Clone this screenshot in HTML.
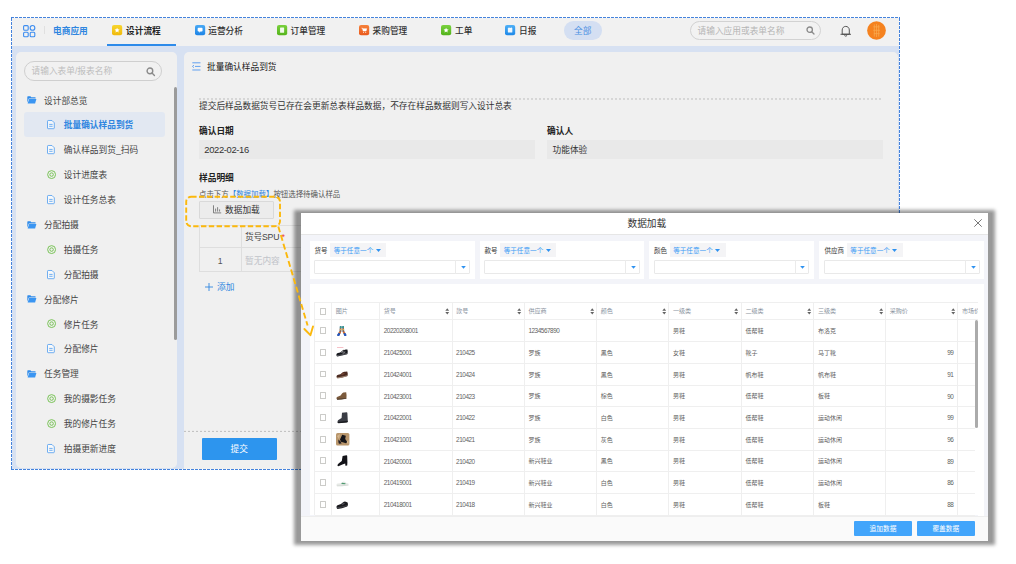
<!DOCTYPE html>
<html lang="zh-CN">
<head>
<meta charset="utf-8">
<title>批量确认样品到货 - 数据加载</title>
<style>
html,body{margin:0;padding:0;background:#fff;}
body{width:1016px;height:564px;position:relative;overflow:hidden;font-family:"Liberation Sans","Noto Sans CJK SC",sans-serif;}
.t{position:absolute;white-space:nowrap;margin:0;padding:0;}
.b{position:absolute;box-sizing:border-box;}
svg{position:absolute;overflow:visible;}
#app{position:absolute;left:0;top:0;width:1016px;height:564px;}
#modal{position:absolute;left:301px;top:213px;width:687px;height:328px;background:#fff;overflow:hidden;}
#modal .t,#modal .b,#modal svg{position:absolute;}
</style>
</head>
<body>
<div id="app">

<div class="b" style="left:12px;top:18px;width:887px;height:451px;background:#d7e1f2;"></div>
<div class="b" style="left:12px;top:18px;width:887px;height:28px;background:#f1f1f1;"></div>
<div class="b" style="left:16px;top:52px;width:161px;height:416px;background:#f0f0f0;border-radius:5px;"></div>
<div class="b" style="left:183.6px;top:52px;width:714.6px;height:417px;background:#f0f0f0;border-radius:5px 5px 0 0;"></div>
<svg style="left:0;top:0" width="1016" height="564"><path d="M11 17.5 H900 M11 469.5 H900 M11.5 18 V469 M899.5 18 V469" fill="none" stroke="#4583dc" stroke-width="1" stroke-dasharray="3 1"/></svg>
<svg style="left:22.5px;top:24.5px" width="12.5" height="12.5" viewBox="0 0 12.5 12.5" fill="none" stroke="#3d8df0" stroke-width="1.1">
<rect x="0.6" y="0.6" width="4.6" height="4.6" rx="1"/><circle cx="9.5" cy="2.9" r="2.35"/>
<rect x="0.6" y="7.2" width="4.6" height="4.6" rx="1"/><rect x="7.2" y="7.2" width="4.6" height="4.6" rx="1"/></svg>
<div class="b" style="left:44px;top:26.2px;width:1px;height:8px;background:#e0e0e0;"></div>
<div class="t" style="left:53px;top:24px;font-size:8.7px;line-height:14px;color:#2f86e0;font-weight:700;">电商应用</div>
<svg style="left:112.4px;top:25px" width="10.2" height="10.2" viewBox="0 0 10 10"><defs><linearGradient id="g112" x1="0" y1="0" x2="0" y2="1"><stop offset="0" stop-color="#f7d52e"/><stop offset="1" stop-color="#f0b90c"/></linearGradient></defs><rect x="0" y="0" width="10" height="10" rx="2" fill="url(#g112)"/><path d="M5 2.6 L5.75 4.2 L7.5 4.4 L6.2 5.6 L6.55 7.3 L5 6.45 L3.45 7.3 L3.8 5.6 L2.5 4.4 L4.25 4.2 Z" fill="#fff"/></svg>
<div class="t" style="left:126px;top:24px;font-size:8.7px;line-height:14px;color:#222;font-weight:700;">设计流程</div>
<div class="b" style="left:107px;top:44px;width:69px;height:2px;background:#2e8bea;"></div>
<svg style="left:194.5px;top:25px" width="10.2" height="10.2" viewBox="0 0 10 10"><defs><linearGradient id="g194" x1="0" y1="0" x2="0" y2="1"><stop offset="0" stop-color="#49a9f5"/><stop offset="1" stop-color="#1d84e6"/></linearGradient></defs><rect x="0" y="0" width="10" height="10" rx="2" fill="url(#g194)"/><rect x="2.6" y="2.8" width="4.8" height="3.6" rx="0.8" fill="#fff"/><path d="M4 6.2 L4 7.6 L5.5 6.2 Z" fill="#fff"/></svg>
<div class="t" style="left:208.2px;top:24px;font-size:8.7px;line-height:14px;color:#333;font-weight:500;">运营分析</div>
<svg style="left:276.8px;top:25px" width="10.2" height="10.2" viewBox="0 0 10 10"><defs><linearGradient id="g276" x1="0" y1="0" x2="0" y2="1"><stop offset="0" stop-color="#79d03c"/><stop offset="1" stop-color="#55b41c"/></linearGradient></defs><rect x="0" y="0" width="10" height="10" rx="2" fill="url(#g276)"/><rect x="3" y="2.4" width="4" height="5.2" rx="0.5" fill="#fff" fill-opacity=".9"/></svg>
<div class="t" style="left:290.5px;top:24px;font-size:8.7px;line-height:14px;color:#333;font-weight:500;">订单管理</div>
<svg style="left:358.8px;top:25px" width="10.2" height="10.2" viewBox="0 0 10 10"><defs><linearGradient id="g358" x1="0" y1="0" x2="0" y2="1"><stop offset="0" stop-color="#f6813a"/><stop offset="1" stop-color="#ea5a1d"/></linearGradient></defs><rect x="0" y="0" width="10" height="10" rx="2" fill="url(#g358)"/><path d="M2.4 3 L3.4 3 L4 5.8 L7 5.8 L7.6 3.6 L3.6 3.6" fill="#fff" stroke="#fff" stroke-width=".5" stroke-linejoin="round"/><circle cx="4.4" cy="7.1" r=".5" fill="#fff"/><circle cx="6.6" cy="7.1" r=".5" fill="#fff"/></svg>
<div class="t" style="left:372.5px;top:24px;font-size:8.7px;line-height:14px;color:#333;font-weight:500;">采购管理</div>
<svg style="left:440.8px;top:25px" width="10.2" height="10.2" viewBox="0 0 10 10"><defs><linearGradient id="g440" x1="0" y1="0" x2="0" y2="1"><stop offset="0" stop-color="#7ad23f"/><stop offset="1" stop-color="#52b21b"/></linearGradient></defs><rect x="0" y="0" width="10" height="10" rx="2" fill="url(#g440)"/><path d="M5 2.6 L5.75 4.2 L7.5 4.4 L6.2 5.6 L6.55 7.3 L5 6.45 L3.45 7.3 L3.8 5.6 L2.5 4.4 L4.25 4.2 Z" fill="#fff"/></svg>
<div class="t" style="left:455px;top:24px;font-size:8.7px;line-height:14px;color:#333;font-weight:500;">工单</div>
<svg style="left:505px;top:25px" width="10.2" height="10.2" viewBox="0 0 10 10"><defs><linearGradient id="g505" x1="0" y1="0" x2="0" y2="1"><stop offset="0" stop-color="#4fb0f7"/><stop offset="1" stop-color="#1d88e8"/></linearGradient></defs><rect x="0" y="0" width="10" height="10" rx="2" fill="url(#g505)"/><rect x="2.8" y="3" width="4.4" height="4.4" rx="0.5" fill="#fff" fill-opacity=".92"/><rect x="3.6" y="2.2" width=".7" height="1.4" fill="#fff"/><rect x="5.7" y="2.2" width=".7" height="1.4" fill="#fff"/></svg>
<div class="t" style="left:519px;top:24px;font-size:8.7px;line-height:14px;color:#333;font-weight:500;">日报</div>
<div class="b" style="left:564px;top:21px;width:37.5px;height:18.6px;background:#d4dff2;border-radius:9.3px;"></div>
<div class="t" style="left:574px;top:24px;font-size:8.7px;line-height:14px;color:#4a90e2;font-weight:400;">全部</div>
<div class="b" style="left:690px;top:21px;width:130.5px;height:19.2px;border:1px solid #d2d2d2;border-radius:9.6px;background:#f2f2f2;"></div>
<div class="t" style="left:697.5px;top:24px;font-size:8.7px;line-height:14px;color:#b5b5b5;font-weight:400;">请输入应用或表单名称</div>
<svg style="left:805.5px;top:26px" width="9" height="9" viewBox="0 0 9 9" fill="none" stroke="#8a8a8a" stroke-width="1.3"><circle cx="3.7" cy="3.7" r="2.7"/><path d="M5.7 5.7 L8 8" stroke-linecap="round"/></svg>
<svg style="left:840px;top:24.5px" width="11.5" height="12.5" viewBox="0 0 11.5 12.5" fill="none" stroke="#444" stroke-width="0.9"><path d="M2.2 9.2 L2.2 5 C2.2 2.8 3.8 1.4 5.75 1.4 C7.7 1.4 9.3 2.8 9.3 5 L9.3 9.2 Z" stroke-linejoin="round"/><path d="M0.9 9.3 L10.6 9.3" stroke-linecap="round"/><path d="M4.7 10.8 Q5.75 11.8 6.8 10.8" stroke-linecap="round"/></svg>
<svg style="left:866.6px;top:20.8px" width="19" height="19" viewBox="0 0 19.5 19.5"><circle cx="9.75" cy="9.75" r="9.6" fill="#f5821f"/><path d="M7.5 3.5 L7.5 16 M9.8 3 L9.8 16.5 M12 4 L12 16 M6.5 6 L13 6 M6.5 9.5 L13.3 9.5 M7 13 L13 13" stroke="#f8a94e" stroke-width=".8" fill="none"/></svg>
<div class="b" style="left:24px;top:61px;width:137.5px;height:20px;border:1px solid #cfcfcf;border-radius:10px;background:#f1f1f1;"></div>
<div class="t" style="left:31.5px;top:64px;font-size:8.7px;line-height:14px;color:#bdbdbd;font-weight:400;">请输入表单/报表名称</div>
<svg style="left:145.5px;top:66.5px" width="9.5" height="9.5" viewBox="0 0 9 9" fill="none" stroke="#8a8a8a" stroke-width="1.3"><circle cx="3.7" cy="3.7" r="2.7"/><path d="M5.7 5.7 L8 8" stroke-linecap="round"/></svg>
<div class="b" style="left:174px;top:87px;width:3px;height:253px;background:#9b9b9b;border-radius:1.5px;"></div>
<div class="b" style="left:24px;top:112.3px;width:141px;height:24.4px;background:#e2e8f2;border-radius:3px;"></div>
<svg style="left:26.8px;top:96.30px" width="9.6" height="7.9" viewBox="0 0 9 7.4"><path d="M0.3 0.9 Q0.3 0.3 0.9 0.3 L3.2 0.3 L4 1.2 L7.6 1.2 Q8.1 1.2 8.1 1.7 L8.1 2.4 L1.7 2.4 L0.3 6.3 Z" fill="#2f8bea"/><path d="M2 2.9 L8.8 2.9 L7.6 7 L0.6 7 Z" fill="#3a95f2"/></svg>
<div class="t" style="left:44px;top:94px;font-size:8.7px;line-height:14px;color:#444;font-weight:400;">设计部总览</div>
<svg style="left:47.4px;top:120.00px" width="7.8" height="9.2" viewBox="0 0 7.8 9.2" fill="none" stroke="#4c9cf0" stroke-width=".8"><path d="M0.5 1.2 Q0.5 0.5 1.2 0.5 L5 0.5 L7.3 2.8 L7.3 8 Q7.3 8.7 6.6 8.7 L1.2 8.7 Q0.5 8.7 0.5 8 Z" fill="#fff" fill-opacity=".6"/><path d="M2.2 4.4 L5.6 4.4 M2.2 6.3 L5.6 6.3"/></svg>
<div class="t" style="left:63.8px;top:118px;font-size:8.7px;line-height:14px;color:#2f86e0;font-weight:700;">批量确认样品到货</div>
<svg style="left:47.4px;top:145.20px" width="7.8" height="9.2" viewBox="0 0 7.8 9.2" fill="none" stroke="#4c9cf0" stroke-width=".8"><path d="M0.5 1.2 Q0.5 0.5 1.2 0.5 L5 0.5 L7.3 2.8 L7.3 8 Q7.3 8.7 6.6 8.7 L1.2 8.7 Q0.5 8.7 0.5 8 Z" fill="#fff" fill-opacity=".6"/><path d="M2.2 4.4 L5.6 4.4 M2.2 6.3 L5.6 6.3"/></svg>
<div class="t" style="left:63.8px;top:143px;font-size:8.7px;line-height:14px;color:#444;font-weight:400;">确认样品到货_扫码</div>
<svg style="left:46.8px;top:170.10px" width="9.2" height="9.2" viewBox="0 0 9.2 9.2" fill="none" stroke="#72bf4e" stroke-width=".95"><circle cx="4.6" cy="4.6" r="3.95"/><circle cx="4.6" cy="4.6" r="1.75"/></svg>
<div class="t" style="left:63.8px;top:168px;font-size:8.7px;line-height:14px;color:#444;font-weight:400;">设计进度表</div>
<svg style="left:47.4px;top:194.90px" width="7.8" height="9.2" viewBox="0 0 7.8 9.2" fill="none" stroke="#4c9cf0" stroke-width=".8"><path d="M0.5 1.2 Q0.5 0.5 1.2 0.5 L5 0.5 L7.3 2.8 L7.3 8 Q7.3 8.7 6.6 8.7 L1.2 8.7 Q0.5 8.7 0.5 8 Z" fill="#fff" fill-opacity=".6"/><path d="M2.2 4.4 L5.6 4.4 M2.2 6.3 L5.6 6.3"/></svg>
<div class="t" style="left:63.8px;top:193px;font-size:8.7px;line-height:14px;color:#444;font-weight:400;">设计任务总表</div>
<svg style="left:26.8px;top:220.50px" width="9.6" height="7.9" viewBox="0 0 9 7.4"><path d="M0.3 0.9 Q0.3 0.3 0.9 0.3 L3.2 0.3 L4 1.2 L7.6 1.2 Q8.1 1.2 8.1 1.7 L8.1 2.4 L1.7 2.4 L0.3 6.3 Z" fill="#2f8bea"/><path d="M2 2.9 L8.8 2.9 L7.6 7 L0.6 7 Z" fill="#3a95f2"/></svg>
<div class="t" style="left:44px;top:218px;font-size:8.7px;line-height:14px;color:#444;font-weight:400;">分配拍摄</div>
<svg style="left:46.8px;top:244.70px" width="9.2" height="9.2" viewBox="0 0 9.2 9.2" fill="none" stroke="#72bf4e" stroke-width=".95"><circle cx="4.6" cy="4.6" r="3.95"/><circle cx="4.6" cy="4.6" r="1.75"/></svg>
<div class="t" style="left:63.8px;top:243px;font-size:8.7px;line-height:14px;color:#444;font-weight:400;">拍摄任务</div>
<svg style="left:47.4px;top:269.50px" width="7.8" height="9.2" viewBox="0 0 7.8 9.2" fill="none" stroke="#4c9cf0" stroke-width=".8"><path d="M0.5 1.2 Q0.5 0.5 1.2 0.5 L5 0.5 L7.3 2.8 L7.3 8 Q7.3 8.7 6.6 8.7 L1.2 8.7 Q0.5 8.7 0.5 8 Z" fill="#fff" fill-opacity=".6"/><path d="M2.2 4.4 L5.6 4.4 M2.2 6.3 L5.6 6.3"/></svg>
<div class="t" style="left:63.8px;top:268px;font-size:8.7px;line-height:14px;color:#444;font-weight:400;">分配拍摄</div>
<svg style="left:26.8px;top:295.10px" width="9.6" height="7.9" viewBox="0 0 9 7.4"><path d="M0.3 0.9 Q0.3 0.3 0.9 0.3 L3.2 0.3 L4 1.2 L7.6 1.2 Q8.1 1.2 8.1 1.7 L8.1 2.4 L1.7 2.4 L0.3 6.3 Z" fill="#2f8bea"/><path d="M2 2.9 L8.8 2.9 L7.6 7 L0.6 7 Z" fill="#3a95f2"/></svg>
<div class="t" style="left:44px;top:293px;font-size:8.7px;line-height:14px;color:#444;font-weight:400;">分配修片</div>
<svg style="left:46.8px;top:319.30px" width="9.2" height="9.2" viewBox="0 0 9.2 9.2" fill="none" stroke="#72bf4e" stroke-width=".95"><circle cx="4.6" cy="4.6" r="3.95"/><circle cx="4.6" cy="4.6" r="1.75"/></svg>
<div class="t" style="left:63.8px;top:318px;font-size:8.7px;line-height:14px;color:#444;font-weight:400;">修片任务</div>
<svg style="left:47.4px;top:344.10px" width="7.8" height="9.2" viewBox="0 0 7.8 9.2" fill="none" stroke="#4c9cf0" stroke-width=".8"><path d="M0.5 1.2 Q0.5 0.5 1.2 0.5 L5 0.5 L7.3 2.8 L7.3 8 Q7.3 8.7 6.6 8.7 L1.2 8.7 Q0.5 8.7 0.5 8 Z" fill="#fff" fill-opacity=".6"/><path d="M2.2 4.4 L5.6 4.4 M2.2 6.3 L5.6 6.3"/></svg>
<div class="t" style="left:63.8px;top:342px;font-size:8.7px;line-height:14px;color:#444;font-weight:400;">分配修片</div>
<svg style="left:26.8px;top:369.70px" width="9.6" height="7.9" viewBox="0 0 9 7.4"><path d="M0.3 0.9 Q0.3 0.3 0.9 0.3 L3.2 0.3 L4 1.2 L7.6 1.2 Q8.1 1.2 8.1 1.7 L8.1 2.4 L1.7 2.4 L0.3 6.3 Z" fill="#2f8bea"/><path d="M2 2.9 L8.8 2.9 L7.6 7 L0.6 7 Z" fill="#3a95f2"/></svg>
<div class="t" style="left:44px;top:367px;font-size:8.7px;line-height:14px;color:#444;font-weight:400;">任务管理</div>
<svg style="left:46.8px;top:393.90px" width="9.2" height="9.2" viewBox="0 0 9.2 9.2" fill="none" stroke="#72bf4e" stroke-width=".95"><circle cx="4.6" cy="4.6" r="3.95"/><circle cx="4.6" cy="4.6" r="1.75"/></svg>
<div class="t" style="left:63.8px;top:392px;font-size:8.7px;line-height:14px;color:#444;font-weight:400;">我的摄影任务</div>
<svg style="left:46.8px;top:418.70px" width="9.2" height="9.2" viewBox="0 0 9.2 9.2" fill="none" stroke="#72bf4e" stroke-width=".95"><circle cx="4.6" cy="4.6" r="3.95"/><circle cx="4.6" cy="4.6" r="1.75"/></svg>
<div class="t" style="left:63.8px;top:417px;font-size:8.7px;line-height:14px;color:#444;font-weight:400;">我的修片任务</div>
<svg style="left:47.4px;top:443.60px" width="7.8" height="9.2" viewBox="0 0 7.8 9.2" fill="none" stroke="#4c9cf0" stroke-width=".8"><path d="M0.5 1.2 Q0.5 0.5 1.2 0.5 L5 0.5 L7.3 2.8 L7.3 8 Q7.3 8.7 6.6 8.7 L1.2 8.7 Q0.5 8.7 0.5 8 Z" fill="#fff" fill-opacity=".6"/><path d="M2.2 4.4 L5.6 4.4 M2.2 6.3 L5.6 6.3"/></svg>
<div class="t" style="left:63.8px;top:442px;font-size:8.7px;line-height:14px;color:#444;font-weight:400;">拍摄更新进度</div>
<svg style="left:192px;top:62.2px" width="8.8" height="8.8" viewBox="0 0 8.8 8.8" fill="none" stroke="#3d8df0" stroke-width=".8"><path d="M0.3 0.8 L8.5 0.8 M3 4.4 L8.5 4.4 M0.3 8 L8.5 8 M1.9 3.2 L0.5 4.4 L1.9 5.6"/></svg>
<div class="t" style="left:207px;top:60px;font-size:8.7px;line-height:14px;color:#222;font-weight:400;">批量确认样品到货</div>
<svg style="left:0;top:0" width="1016" height="564"><path d="M199 99 L883 99 M184 431.4 L898 431.4" stroke="#bdbdbd" stroke-width="1" stroke-dasharray="2 2" fill="none"/></svg>
<div class="t" style="left:199px;top:99px;font-size:8.7px;line-height:14px;color:#333;font-weight:400;">提交后样品数据货号已存在会更新总表样品数据，不存在样品数据则写入设计总表</div>
<div class="t" style="left:199px;top:124px;font-size:8.7px;line-height:14px;color:#222;font-weight:700;">确认日期</div>
<div class="t" style="left:547px;top:124px;font-size:8.7px;line-height:14px;color:#222;font-weight:700;">确认人</div>
<div class="b" style="left:199px;top:140.4px;width:335.5px;height:18.5px;background:#e9e9e9;"></div>
<div class="b" style="left:547px;top:140.4px;width:336px;height:18.5px;background:#e9e9e9;"></div>
<div class="t" style="left:204.3px;top:142px;font-size:9.4px;line-height:15px;color:#333;font-weight:400;letter-spacing:-.34px;">2022-02-16</div>
<div class="t" style="left:552.5px;top:143px;font-size:8.7px;line-height:14px;color:#333;font-weight:400;">功能体验</div>
<div class="t" style="left:199px;top:171px;font-size:8.7px;line-height:14px;color:#222;font-weight:700;">样品明细</div>
<div class="t" style="left:199px;top:188px;font-size:7.45px;line-height:13px;color:#555;font-weight:400;">点击下方<span style="color:#2f86e0">【数据加载】</span>按钮选择待确认样品</div>
<div class="b" style="left:199px;top:200.5px;width:74.5px;height:18.2px;border:1px solid #d9d9d9;background:#ececec;border-radius:1px;"></div>
<svg style="left:213px;top:205.4px" width="8.4" height="8.4" viewBox="0 0 8.4 8.4" fill="none" stroke="#666" stroke-width=".8"><path d="M0.5 0.3 L0.5 7.9 L8.2 7.9"/><path d="M2.6 3.6 L2.6 6.6 M4.6 2.2 L4.6 6.6 M6.6 4.4 L6.6 6.6"/></svg>
<div class="t" style="left:225px;top:203px;font-size:8.7px;line-height:14px;color:#333;font-weight:400;">数据加载</div>
<div class="b" style="left:199px;top:225px;width:200px;height:23px;border:1px solid #dedede;border-right:none;background:#f0f0f0;"></div>
<div class="b" style="left:199px;top:246.8px;width:200px;height:25.5px;border:1px solid #dedede;border-right:none;border-top:1px solid #dedede;background:#f0f0f0;"></div>
<div class="b" style="left:241px;top:225px;width:1px;height:47px;background:#dedede;"></div>
<div class="t" style="left:245px;top:230px;font-size:8.7px;line-height:14px;color:#444;font-weight:400;letter-spacing:-.2px;">货号SPU <span style="color:#e8413a">*</span></div>
<div class="t" style="left:217.8px;top:254px;font-size:8.7px;line-height:14px;color:#555;font-weight:400;">1</div>
<div class="t" style="left:245px;top:254px;font-size:8.7px;line-height:14px;color:#c0c3c9;font-weight:400;">暂无内容</div>
<svg style="left:205px;top:282.8px" width="8" height="8" viewBox="0 0 8 8" stroke="#2f86e0" stroke-width=".9"><path d="M4 0 L4 8 M0 4 L8 4"/></svg>
<div class="t" style="left:217px;top:280px;font-size:8.7px;line-height:14px;color:#2f86e0;font-weight:400;">添加</div>
<div class="b" style="left:202px;top:438px;width:74.5px;height:22px;background:#2d95ee;border-radius:1px;"></div>
<div class="t" style="left:230.6px;top:442px;font-size:8.7px;line-height:14px;color:#fff;font-weight:400;">提交</div>
</div>
<div class="b" style="left:297px;top:213px;width:695.3px;height:328.7px;background:rgba(0,0,0,.4);box-shadow:0 0 3.5px 3px rgba(0,0,0,.4);"></div>
<div id="modal">
<div class="b" style="left:0px;top:0px;width:687px;height:21.5px;background:#fff;border-bottom:1px solid #e6e6e6;"></div>
<div class="t" style="left:326.5px;top:3px;font-size:9.7px;line-height:15px;color:#333;font-weight:400;">数据加载</div>
<svg style="left:673px;top:5.8px" width="8" height="8" viewBox="0 0 8 8" stroke="#555" stroke-width=".8"><path d="M0.3 0.3 L7.7 7.7 M7.7 0.3 L0.3 7.7"/></svg>
<div class="b" style="left:0px;top:21.5px;width:687px;height:281px;background:#f3f4f9;"></div>
<div class="b" style="left:9px;top:27.8px;width:164.7px;height:38px;background:#fff;"></div>
<div class="t" style="left:13.5px;top:32px;font-size:6.5px;line-height:11px;color:#333;font-weight:400;">货号</div>
<div class="b" style="left:29.3px;top:30.3px;width:56px;height:13.8px;background:#f4f4f6;"></div>
<div class="t" style="left:32.7px;top:32px;font-size:6.6px;line-height:11px;color:#3a9bf5;font-weight:400;">等于任意一个</div>
<svg style="left:74.70px;top:36.20px" width="5" height="3" viewBox="0 0 5 3"><path d="M0 0 L5 0 L2.5 3 Z" fill="#2e92f0"/></svg>
<div class="b" style="left:13px;top:46.7px;width:155.6px;height:14.6px;border:1px solid #e9e9e9;background:#fff;border-radius:1px;"></div>
<div class="b" style="left:154px;top:47.2px;width:1px;height:13.6px;background:#ebebeb;"></div>
<svg style="left:159.60px;top:52.80px" width="5" height="2.8" viewBox="0 0 5 3"><path d="M0 0 L5 0 L2.5 3 Z" fill="#2e92f0"/></svg>
<div class="b" style="left:178.8px;top:27.8px;width:164.7px;height:38px;background:#fff;"></div>
<div class="t" style="left:183.5px;top:32px;font-size:6.5px;line-height:11px;color:#333;font-weight:400;">款号</div>
<div class="b" style="left:199.3px;top:30.3px;width:56px;height:13.8px;background:#f4f4f6;"></div>
<div class="t" style="left:202.7px;top:32px;font-size:6.6px;line-height:11px;color:#3a9bf5;font-weight:400;">等于任意一个</div>
<svg style="left:244.70px;top:36.20px" width="5" height="3" viewBox="0 0 5 3"><path d="M0 0 L5 0 L2.5 3 Z" fill="#2e92f0"/></svg>
<div class="b" style="left:183.0px;top:46.7px;width:155.6px;height:14.6px;border:1px solid #e9e9e9;background:#fff;border-radius:1px;"></div>
<div class="b" style="left:324.0px;top:47.2px;width:1px;height:13.6px;background:#ebebeb;"></div>
<svg style="left:329.60px;top:52.80px" width="5" height="2.8" viewBox="0 0 5 3"><path d="M0 0 L5 0 L2.5 3 Z" fill="#2e92f0"/></svg>
<div class="b" style="left:348.2px;top:27.8px;width:164.7px;height:38px;background:#fff;"></div>
<div class="t" style="left:353.0px;top:32px;font-size:6.5px;line-height:11px;color:#333;font-weight:400;">颜色</div>
<div class="b" style="left:368.8px;top:30.3px;width:56px;height:13.8px;background:#f4f4f6;"></div>
<div class="t" style="left:372.2px;top:32px;font-size:6.6px;line-height:11px;color:#3a9bf5;font-weight:400;">等于任意一个</div>
<svg style="left:414.20px;top:36.20px" width="5" height="3" viewBox="0 0 5 3"><path d="M0 0 L5 0 L2.5 3 Z" fill="#2e92f0"/></svg>
<div class="b" style="left:352.5px;top:46.7px;width:155.6px;height:14.6px;border:1px solid #e9e9e9;background:#fff;border-radius:1px;"></div>
<div class="b" style="left:493.5px;top:47.2px;width:1px;height:13.6px;background:#ebebeb;"></div>
<svg style="left:499.10px;top:52.80px" width="5" height="2.8" viewBox="0 0 5 3"><path d="M0 0 L5 0 L2.5 3 Z" fill="#2e92f0"/></svg>
<div class="b" style="left:518.3px;top:27.8px;width:164.7px;height:38px;background:#fff;"></div>
<div class="t" style="left:523.5px;top:32px;font-size:6.5px;line-height:11px;color:#333;font-weight:400;">供应商</div>
<div class="b" style="left:545.9px;top:30.3px;width:56px;height:13.8px;background:#f4f4f6;"></div>
<div class="t" style="left:549.3px;top:32px;font-size:6.6px;line-height:11px;color:#3a9bf5;font-weight:400;">等于任意一个</div>
<svg style="left:591.30px;top:36.20px" width="5" height="3" viewBox="0 0 5 3"><path d="M0 0 L5 0 L2.5 3 Z" fill="#2e92f0"/></svg>
<div class="b" style="left:523.0px;top:46.7px;width:155.6px;height:14.6px;border:1px solid #e9e9e9;background:#fff;border-radius:1px;"></div>
<div class="b" style="left:664.0px;top:47.2px;width:1px;height:13.6px;background:#ebebeb;"></div>
<svg style="left:669.60px;top:52.80px" width="5" height="2.8" viewBox="0 0 5 3"><path d="M0 0 L5 0 L2.5 3 Z" fill="#2e92f0"/></svg>
<div class="b" style="left:9px;top:70.7px;width:674px;height:231.8px;background:#fff;"></div>
<div class="b" style="left:13.1px;top:89.1px;width:664.1999999999999px;height:17.9px;border-top:1px solid #efefef;border-bottom:1px solid #efefef;background:#fff;"></div>
<div class="b" style="left:13.1px;top:89.1px;width:1px;height:213.39999999999998px;background:#efefef;"></div>
<div class="b" style="left:30.1px;top:89.1px;width:1px;height:213.39999999999998px;background:#efefef;"></div>
<div class="b" style="left:78.1px;top:89.1px;width:1px;height:213.39999999999998px;background:#efefef;"></div>
<div class="b" style="left:150.5px;top:89.1px;width:1px;height:213.39999999999998px;background:#efefef;"></div>
<div class="b" style="left:222.8px;top:89.1px;width:1px;height:213.39999999999998px;background:#efefef;"></div>
<div class="b" style="left:295.1px;top:89.1px;width:1px;height:213.39999999999998px;background:#efefef;"></div>
<div class="b" style="left:367.3px;top:89.1px;width:1px;height:213.39999999999998px;background:#efefef;"></div>
<div class="b" style="left:439.8px;top:89.1px;width:1px;height:213.39999999999998px;background:#efefef;"></div>
<div class="b" style="left:512.3px;top:89.1px;width:1px;height:213.39999999999998px;background:#efefef;"></div>
<div class="b" style="left:584.1px;top:89.1px;width:1px;height:213.39999999999998px;background:#efefef;"></div>
<div class="b" style="left:656.3px;top:89.1px;width:1px;height:213.39999999999998px;background:#efefef;"></div>
<div class="b" style="left:18.6px;top:94.8px;width:6.8px;height:6.8px;border:1px solid #cbcbc8;background:#fff;border-radius:.5px;"></div>
<div class="t" style="left:34.7px;top:92px;font-size:6.1px;line-height:11px;color:#8a93a0;font-weight:400;">图片</div>
<div class="t" style="left:82.7px;top:92px;font-size:6.1px;line-height:11px;color:#8a93a0;font-weight:400;">货号</div>
<svg style="left:144.10px;top:95.00px" width="4.5" height="6.8" viewBox="0 0 3.6 6.4" fill="#626262"><path d="M0 2.6 L1.8 0.2 L3.6 2.6 Z"/><path d="M0 3.8 L1.8 6.2 L3.6 3.8 Z"/></svg>
<div class="t" style="left:155.1px;top:92px;font-size:6.1px;line-height:11px;color:#8a93a0;font-weight:400;">款号</div>
<svg style="left:216.40px;top:95.00px" width="4.5" height="6.8" viewBox="0 0 3.6 6.4" fill="#626262"><path d="M0 2.6 L1.8 0.2 L3.6 2.6 Z"/><path d="M0 3.8 L1.8 6.2 L3.6 3.8 Z"/></svg>
<div class="t" style="left:227.4px;top:92px;font-size:6.1px;line-height:11px;color:#8a93a0;font-weight:400;">供应商</div>
<svg style="left:288.70px;top:95.00px" width="4.5" height="6.8" viewBox="0 0 3.6 6.4" fill="#626262"><path d="M0 2.6 L1.8 0.2 L3.6 2.6 Z"/><path d="M0 3.8 L1.8 6.2 L3.6 3.8 Z"/></svg>
<div class="t" style="left:299.7px;top:92px;font-size:6.1px;line-height:11px;color:#8a93a0;font-weight:400;">颜色</div>
<svg style="left:360.90px;top:95.00px" width="4.5" height="6.8" viewBox="0 0 3.6 6.4" fill="#626262"><path d="M0 2.6 L1.8 0.2 L3.6 2.6 Z"/><path d="M0 3.8 L1.8 6.2 L3.6 3.8 Z"/></svg>
<div class="t" style="left:371.9px;top:92px;font-size:6.1px;line-height:11px;color:#8a93a0;font-weight:400;">一级类</div>
<svg style="left:433.40px;top:95.00px" width="4.5" height="6.8" viewBox="0 0 3.6 6.4" fill="#626262"><path d="M0 2.6 L1.8 0.2 L3.6 2.6 Z"/><path d="M0 3.8 L1.8 6.2 L3.6 3.8 Z"/></svg>
<div class="t" style="left:444.4px;top:92px;font-size:6.1px;line-height:11px;color:#8a93a0;font-weight:400;">二级类</div>
<svg style="left:505.90px;top:95.00px" width="4.5" height="6.8" viewBox="0 0 3.6 6.4" fill="#626262"><path d="M0 2.6 L1.8 0.2 L3.6 2.6 Z"/><path d="M0 3.8 L1.8 6.2 L3.6 3.8 Z"/></svg>
<div class="t" style="left:516.9px;top:92px;font-size:6.1px;line-height:11px;color:#8a93a0;font-weight:400;">三级类</div>
<svg style="left:577.70px;top:95.00px" width="4.5" height="6.8" viewBox="0 0 3.6 6.4" fill="#626262"><path d="M0 2.6 L1.8 0.2 L3.6 2.6 Z"/><path d="M0 3.8 L1.8 6.2 L3.6 3.8 Z"/></svg>
<div class="t" style="left:588.7px;top:92px;font-size:6.1px;line-height:11px;color:#8a93a0;font-weight:400;">采购价</div>
<svg style="left:649.90px;top:95.00px" width="4.5" height="6.8" viewBox="0 0 3.6 6.4" fill="#626262"><path d="M0 2.6 L1.8 0.2 L3.6 2.6 Z"/><path d="M0 3.8 L1.8 6.2 L3.6 3.8 Z"/></svg>
<div class="t" style="left:660.9px;top:92px;font-size:6.1px;line-height:11px;color:#8a93a0;font-weight:400;">市场价</div>
<div class="b" style="left:13.5px;top:128.2px;width:660.5px;height:1px;background:#efefef;"></div>
<div class="b" style="left:18.6px;top:114.25px;width:6.8px;height:6.8px;border:1px solid #cbcbc8;background:#fff;border-radius:.5px;"></div>
<svg style="left:35.40px;top:112.60px" width="11.6" height="10.4" viewBox="0 0 11.6 10.4"><path d="M3.9 0.2 L5.5 0.2 L5.3 5.6 L3.4 9.4 Q2.6 10.3 1.6 9.8 Q0.9 9.2 1.6 8.2 L3.6 5.2 Z" fill="#2c4a78"/><path d="M6.3 0.2 L7.9 0.2 L8.2 5.2 L10.1 8.2 Q10.8 9.2 10 9.8 Q9 10.3 8.3 9.4 L6.5 5.6 Z" fill="#2c4a78"/><path d="M3.9 0.2 L5.5 0.2 L5.45 2 L3.85 2 Z M6.3 0.2 L7.9 0.2 L8 2 L6.35 2 Z" fill="#2d9c92"/><path d="M3.8 2.6 L5.4 2.6 L5.35 4.4 L3.7 4.4 Z M6.4 2.6 L8 2.6 L8.1 4.4 L6.45 4.4 Z" fill="#f0a43a"/><path d="M3.5 5.4 L5.3 5.6 L4.4 7.4 L2.5 6.9 Z M6.5 5.6 L8.3 5.4 L9.3 6.9 L7.4 7.4 Z" fill="#e8742c"/><path d="M2.3 7.2 L4.2 7.8 L3.4 9.4 Q2.6 10.3 1.6 9.8 Q0.9 9.2 1.6 8.2 Z M7.6 7.8 L9.5 7.2 L10.1 8.2 Q10.8 9.2 10 9.8 Q9 10.3 8.3 9.4 Z" fill="#2456c4"/></svg>
<div class="t" style="left:82.7px;top:112px;font-size:6.4px;line-height:11px;color:#5f5f5f;font-weight:400;letter-spacing:-.45px;">20220208001</div>
<div class="t" style="left:227.4px;top:112px;font-size:6.4px;line-height:11px;color:#5f5f5f;font-weight:400;letter-spacing:-.45px;">1234567890</div>
<div class="t" style="left:371.9px;top:113px;font-size:6.0px;line-height:10px;color:#5f5f5f;font-weight:400;">男鞋</div>
<div class="t" style="left:444.4px;top:113px;font-size:6.0px;line-height:10px;color:#5f5f5f;font-weight:400;">低帮鞋</div>
<div class="t" style="left:516.9px;top:113px;font-size:6.0px;line-height:10px;color:#5f5f5f;font-weight:400;">布洛克</div>
<div class="b" style="left:13.5px;top:149.9px;width:660.5px;height:1px;background:#efefef;"></div>
<div class="b" style="left:18.6px;top:135.95px;width:6.8px;height:6.8px;border:1px solid #cbcbc8;background:#fff;border-radius:.5px;"></div>
<svg style="left:35.50px;top:133.90px" width="7" height="1" viewBox="0 0 7 1"><rect x="0" y="0.15" width="6.4" height=".55" fill="#ef8f9c"/></svg>
<svg style="left:35.40px;top:136.20px" width="12.2" height="7.8" viewBox="0 0 12.2 7.8"><path d="M0.4 5.4 Q0.6 4.2 2 4 L4.2 3.6 L6.6 1.4 Q7.4 0.6 8.6 0.9 L9.6 0.4 L11.4 0.6 Q12 2.4 11.6 4.4 L11.2 5.2 L6 6.6 L1.4 7.4 Q0.3 7.2 0.4 5.4 Z" fill="#15161b"/><path d="M5.2 3.6 L7.4 1.8 M6.2 4.2 L8.4 2.4 M7.4 4.6 L9.4 3" stroke="#e9e9ee" stroke-width=".55" fill="none"/><path d="M1 6.6 L6 5.8 L11.2 4.4" stroke="#8d8f98" stroke-width=".5" fill="none"/></svg>
<div class="t" style="left:82.7px;top:134px;font-size:6.4px;line-height:11px;color:#5f5f5f;font-weight:400;letter-spacing:-.45px;">210425001</div>
<div class="t" style="left:155.1px;top:134px;font-size:6.4px;line-height:11px;color:#5f5f5f;font-weight:400;letter-spacing:-.45px;">210425</div>
<div class="t" style="left:227.4px;top:135px;font-size:6.0px;line-height:10px;color:#5f5f5f;font-weight:400;">罗族</div>
<div class="t" style="left:299.7px;top:135px;font-size:6.0px;line-height:10px;color:#5f5f5f;font-weight:400;">黑色</div>
<div class="t" style="left:371.9px;top:135px;font-size:6.0px;line-height:10px;color:#5f5f5f;font-weight:400;">女鞋</div>
<div class="t" style="left:444.4px;top:135px;font-size:6.0px;line-height:10px;color:#5f5f5f;font-weight:400;">靴子</div>
<div class="t" style="left:516.9px;top:135px;font-size:6.0px;line-height:10px;color:#5f5f5f;font-weight:400;">马丁靴</div>
<div class="t" style="left:584.1px;top:134px;font-size:6.4px;line-height:11px;color:#5f5f5f;font-weight:400;width:68.40px;text-align:right;letter-spacing:-.45px;">99</div>
<div class="b" style="left:13.5px;top:171.6px;width:660.5px;height:1px;background:#efefef;"></div>
<div class="b" style="left:18.6px;top:157.65px;width:6.8px;height:6.8px;border:1px solid #cbcbc8;background:#fff;border-radius:.5px;"></div>
<svg style="left:35.40px;top:158.20px" width="12.2" height="7.8" viewBox="0 0 12.2 7.8"><path d="M0.5 5.2 Q0.8 4 2.2 3.8 L4.4 3.2 L6.8 1.2 Q7.8 0.4 9 0.8 L11.2 0.5 Q12 2.4 11.7 4.2 L11.3 5 L6 6.4 L1.5 7.1 Q0.4 6.8 0.5 5.2 Z" fill="#4b2a20"/><path d="M4.8 3.4 L7.2 1.6 L9 2.2 L6.6 4.2 Z" fill="#6e4232"/><path d="M0.8 6.4 L6 5.6 L11.4 4.2 L11.3 5.2 L6 6.8 L1.4 7.4 Z" fill="#a08674"/></svg>
<div class="t" style="left:82.7px;top:156px;font-size:6.4px;line-height:11px;color:#5f5f5f;font-weight:400;letter-spacing:-.45px;">210424001</div>
<div class="t" style="left:155.1px;top:156px;font-size:6.4px;line-height:11px;color:#5f5f5f;font-weight:400;letter-spacing:-.45px;">210424</div>
<div class="t" style="left:227.4px;top:157px;font-size:6.0px;line-height:10px;color:#5f5f5f;font-weight:400;">罗族</div>
<div class="t" style="left:299.7px;top:157px;font-size:6.0px;line-height:10px;color:#5f5f5f;font-weight:400;">黑色</div>
<div class="t" style="left:371.9px;top:157px;font-size:6.0px;line-height:10px;color:#5f5f5f;font-weight:400;">男鞋</div>
<div class="t" style="left:444.4px;top:157px;font-size:6.0px;line-height:10px;color:#5f5f5f;font-weight:400;">帆布鞋</div>
<div class="t" style="left:516.9px;top:157px;font-size:6.0px;line-height:10px;color:#5f5f5f;font-weight:400;">帆布鞋</div>
<div class="t" style="left:584.1px;top:156px;font-size:6.4px;line-height:11px;color:#5f5f5f;font-weight:400;width:68.40px;text-align:right;letter-spacing:-.45px;">91</div>
<div class="b" style="left:13.5px;top:193.3px;width:660.5px;height:1px;background:#efefef;"></div>
<div class="b" style="left:18.6px;top:179.35px;width:6.8px;height:6.8px;border:1px solid #cbcbc8;background:#fff;border-radius:.5px;"></div>
<svg style="left:35.40px;top:179.40px" width="11" height="8" viewBox="0 0 11 8"><path d="M0.5 5.8 Q0.8 4.6 2.2 4.4 L4.6 3.4 L6.2 1.2 L7.4 0.4 L10.2 0.3 Q10.7 2.6 10.5 5.6 L10.3 6.6 L5.6 7.2 L1.2 7.5 Q0.4 7.1 0.5 5.8 Z" fill="#7b5a3c"/><path d="M0.7 6.8 L5.6 6.5 L10.4 5.9 L10.3 6.8 L5.6 7.4 L1.2 7.7 Z" fill="#4d3a2a"/></svg>
<div class="t" style="left:82.7px;top:178px;font-size:6.4px;line-height:11px;color:#5f5f5f;font-weight:400;letter-spacing:-.45px;">210423001</div>
<div class="t" style="left:155.1px;top:178px;font-size:6.4px;line-height:11px;color:#5f5f5f;font-weight:400;letter-spacing:-.45px;">210423</div>
<div class="t" style="left:227.4px;top:178px;font-size:6.0px;line-height:10px;color:#5f5f5f;font-weight:400;">罗族</div>
<div class="t" style="left:299.7px;top:178px;font-size:6.0px;line-height:10px;color:#5f5f5f;font-weight:400;">棕色</div>
<div class="t" style="left:371.9px;top:178px;font-size:6.0px;line-height:10px;color:#5f5f5f;font-weight:400;">男鞋</div>
<div class="t" style="left:444.4px;top:178px;font-size:6.0px;line-height:10px;color:#5f5f5f;font-weight:400;">低帮鞋</div>
<div class="t" style="left:516.9px;top:178px;font-size:6.0px;line-height:10px;color:#5f5f5f;font-weight:400;">板鞋</div>
<div class="t" style="left:584.1px;top:178px;font-size:6.4px;line-height:11px;color:#5f5f5f;font-weight:400;width:68.40px;text-align:right;letter-spacing:-.45px;">90</div>
<div class="b" style="left:13.5px;top:215.0px;width:660.5px;height:1px;background:#efefef;"></div>
<div class="b" style="left:18.6px;top:201.05px;width:6.8px;height:6.8px;border:1px solid #cbcbc8;background:#fff;border-radius:.5px;"></div>
<svg style="left:35.80px;top:198.70px" width="11.2" height="11.4" viewBox="0 0 11.2 11.4"><path d="M5 0.8 L9.6 0.2 Q10.4 0.3 10.4 1.2 L10.8 9 Q10.8 10 9.8 10.2 L1.6 11.1 Q0.4 11 0.5 9.6 Q0.7 8.2 2.2 7.6 L4.6 6 Z" fill="#3a3c44"/><path d="M0.6 10 L10.8 8.8 L10.8 9.4 Q10.8 10.2 9.8 10.4 L1.6 11.3 Q0.5 11.2 0.6 10 Z" fill="#1b1c20"/></svg>
<div class="t" style="left:82.7px;top:199px;font-size:6.4px;line-height:11px;color:#5f5f5f;font-weight:400;letter-spacing:-.45px;">210422001</div>
<div class="t" style="left:155.1px;top:199px;font-size:6.4px;line-height:11px;color:#5f5f5f;font-weight:400;letter-spacing:-.45px;">210422</div>
<div class="t" style="left:227.4px;top:200px;font-size:6.0px;line-height:10px;color:#5f5f5f;font-weight:400;">罗族</div>
<div class="t" style="left:299.7px;top:200px;font-size:6.0px;line-height:10px;color:#5f5f5f;font-weight:400;">白色</div>
<div class="t" style="left:371.9px;top:200px;font-size:6.0px;line-height:10px;color:#5f5f5f;font-weight:400;">男鞋</div>
<div class="t" style="left:444.4px;top:200px;font-size:6.0px;line-height:10px;color:#5f5f5f;font-weight:400;">低帮鞋</div>
<div class="t" style="left:516.9px;top:200px;font-size:6.0px;line-height:10px;color:#5f5f5f;font-weight:400;">运动休闲</div>
<div class="t" style="left:584.1px;top:199px;font-size:6.4px;line-height:11px;color:#5f5f5f;font-weight:400;width:68.40px;text-align:right;letter-spacing:-.45px;">99</div>
<div class="b" style="left:13.5px;top:236.7px;width:660.5px;height:1px;background:#efefef;"></div>
<div class="b" style="left:18.6px;top:222.75px;width:6.8px;height:6.8px;border:1px solid #cbcbc8;background:#fff;border-radius:.5px;"></div>
<svg style="left:34.80px;top:219.90px" width="13.4" height="12.6" viewBox="0 0 13.4 12.6"><rect x="0" y="0" width="13.4" height="12.6" rx="1.6" fill="#b9966c"/><path d="M1 3 L4 1 L3 6 Z M10 9 L12.6 7 L12.4 11.4 Z" fill="#d3b48c"/><path d="M6.2 1.8 L9.8 2.8 L9.2 6 L11 8.6 Q11.2 9.8 10 10.2 L5 8.8 L4 6.4 Z" fill="#17161a"/><path d="M2.4 6.6 L4.6 8.6 L5.6 10.4 L3 10.8 Q2 10 2.4 6.6 Z" fill="#242126"/></svg>
<div class="t" style="left:82.7px;top:221px;font-size:6.4px;line-height:11px;color:#5f5f5f;font-weight:400;letter-spacing:-.45px;">210421001</div>
<div class="t" style="left:155.1px;top:221px;font-size:6.4px;line-height:11px;color:#5f5f5f;font-weight:400;letter-spacing:-.45px;">210421</div>
<div class="t" style="left:227.4px;top:222px;font-size:6.0px;line-height:10px;color:#5f5f5f;font-weight:400;">罗族</div>
<div class="t" style="left:299.7px;top:222px;font-size:6.0px;line-height:10px;color:#5f5f5f;font-weight:400;">灰色</div>
<div class="t" style="left:371.9px;top:222px;font-size:6.0px;line-height:10px;color:#5f5f5f;font-weight:400;">男鞋</div>
<div class="t" style="left:444.4px;top:222px;font-size:6.0px;line-height:10px;color:#5f5f5f;font-weight:400;">低帮鞋</div>
<div class="t" style="left:516.9px;top:222px;font-size:6.0px;line-height:10px;color:#5f5f5f;font-weight:400;">运动休闲</div>
<div class="t" style="left:584.1px;top:221px;font-size:6.4px;line-height:11px;color:#5f5f5f;font-weight:400;width:68.40px;text-align:right;letter-spacing:-.45px;">96</div>
<div class="b" style="left:13.5px;top:258.4px;width:660.5px;height:1px;background:#efefef;"></div>
<div class="b" style="left:18.6px;top:244.45px;width:6.8px;height:6.8px;border:1px solid #cbcbc8;background:#fff;border-radius:.5px;"></div>
<svg style="left:35.80px;top:242.10px" width="11" height="11.6" viewBox="0 0 11 11.6"><path d="M5.6 0.9 L9.4 0.2 Q10.2 0.2 10.2 1.1 L10.4 7.6 L10.2 10.6 L8.4 10.8 L8.2 8.6 L5.4 9.6 L1.4 11.3 Q0.4 11.2 0.5 10 Q0.8 8.8 2.2 8 L4.8 6 Z" fill="#131318"/></svg>
<div class="t" style="left:82.7px;top:243px;font-size:6.4px;line-height:11px;color:#5f5f5f;font-weight:400;letter-spacing:-.45px;">210420001</div>
<div class="t" style="left:155.1px;top:243px;font-size:6.4px;line-height:11px;color:#5f5f5f;font-weight:400;letter-spacing:-.45px;">210420</div>
<div class="t" style="left:227.4px;top:243px;font-size:6.0px;line-height:10px;color:#5f5f5f;font-weight:400;">新兴鞋业</div>
<div class="t" style="left:299.7px;top:243px;font-size:6.0px;line-height:10px;color:#5f5f5f;font-weight:400;">黑色</div>
<div class="t" style="left:371.9px;top:243px;font-size:6.0px;line-height:10px;color:#5f5f5f;font-weight:400;">男鞋</div>
<div class="t" style="left:444.4px;top:243px;font-size:6.0px;line-height:10px;color:#5f5f5f;font-weight:400;">低帮鞋</div>
<div class="t" style="left:516.9px;top:243px;font-size:6.0px;line-height:10px;color:#5f5f5f;font-weight:400;">运动休闲</div>
<div class="t" style="left:584.1px;top:243px;font-size:6.4px;line-height:11px;color:#5f5f5f;font-weight:400;width:68.40px;text-align:right;letter-spacing:-.45px;">89</div>
<div class="b" style="left:13.5px;top:280.1px;width:660.5px;height:1px;background:#efefef;"></div>
<div class="b" style="left:18.6px;top:266.15px;width:6.8px;height:6.8px;border:1px solid #cbcbc8;background:#fff;border-radius:.5px;"></div>
<svg style="left:34.90px;top:267.80px" width="13" height="5.8" viewBox="0 0 13 5.8"><path d="M0.5 3.6 Q0.6 2.6 2 2.6 L4.6 2.2 L7 0.8 Q8 0.3 9 0.9 L10.4 2 L12.4 2.4 Q12.8 3.6 12.4 4.6 L6 5.2 L1 5.3 Q0.4 4.8 0.5 3.6 Z" fill="#e6e9e6"/><path d="M6 1.8 L9.6 2.2 L9.2 3.2 L5.2 2.9 Z" fill="#4e9a70"/><path d="M0.8 4.8 L6 4.7 L12.4 4.1" stroke="#c9cdc9" stroke-width=".5" fill="none"/></svg>
<div class="t" style="left:82.7px;top:264px;font-size:6.4px;line-height:11px;color:#5f5f5f;font-weight:400;letter-spacing:-.45px;">210419001</div>
<div class="t" style="left:155.1px;top:264px;font-size:6.4px;line-height:11px;color:#5f5f5f;font-weight:400;letter-spacing:-.45px;">210419</div>
<div class="t" style="left:227.4px;top:265px;font-size:6.0px;line-height:10px;color:#5f5f5f;font-weight:400;">新兴鞋业</div>
<div class="t" style="left:299.7px;top:265px;font-size:6.0px;line-height:10px;color:#5f5f5f;font-weight:400;">白色</div>
<div class="t" style="left:371.9px;top:265px;font-size:6.0px;line-height:10px;color:#5f5f5f;font-weight:400;">男鞋</div>
<div class="t" style="left:444.4px;top:265px;font-size:6.0px;line-height:10px;color:#5f5f5f;font-weight:400;">低帮鞋</div>
<div class="t" style="left:516.9px;top:265px;font-size:6.0px;line-height:10px;color:#5f5f5f;font-weight:400;">运动休闲</div>
<div class="t" style="left:584.1px;top:264px;font-size:6.4px;line-height:11px;color:#5f5f5f;font-weight:400;width:68.40px;text-align:right;letter-spacing:-.45px;">86</div>
<div class="b" style="left:13.5px;top:301.8px;width:660.5px;height:1px;background:#efefef;"></div>
<div class="b" style="left:18.6px;top:287.85px;width:6.8px;height:6.8px;border:1px solid #cbcbc8;background:#fff;border-radius:.5px;"></div>
<svg style="left:35.30px;top:288.10px" width="12.4" height="8.2" viewBox="0 0 12.4 8.2"><path d="M0.5 5.6 Q0.7 4.2 2.2 4 L5 3 L7.4 1 Q8.6 0.3 9.8 0.8 L11.6 1.6 Q12.2 3 11.8 4.6 L11.2 5.6 L6 7.2 L1.4 7.9 Q0.4 7.5 0.5 5.6 Z" fill="#1a1a1e"/><path d="M5.4 3.2 L7.6 1.6 L9 2.6 L6.6 4.2 Z" fill="#4a4a52"/><path d="M0.8 6.8 L6 6 L11.4 4.6" stroke="#6c6c74" stroke-width=".5" fill="none"/></svg>
<div class="t" style="left:82.7px;top:286px;font-size:6.4px;line-height:11px;color:#5f5f5f;font-weight:400;letter-spacing:-.45px;">210418001</div>
<div class="t" style="left:155.1px;top:286px;font-size:6.4px;line-height:11px;color:#5f5f5f;font-weight:400;letter-spacing:-.45px;">210418</div>
<div class="t" style="left:227.4px;top:287px;font-size:6.0px;line-height:10px;color:#5f5f5f;font-weight:400;">新兴鞋业</div>
<div class="t" style="left:299.7px;top:287px;font-size:6.0px;line-height:10px;color:#5f5f5f;font-weight:400;">白色</div>
<div class="t" style="left:371.9px;top:287px;font-size:6.0px;line-height:10px;color:#5f5f5f;font-weight:400;">男鞋</div>
<div class="t" style="left:444.4px;top:287px;font-size:6.0px;line-height:10px;color:#5f5f5f;font-weight:400;">低帮鞋</div>
<div class="t" style="left:516.9px;top:287px;font-size:6.0px;line-height:10px;color:#5f5f5f;font-weight:400;">板鞋</div>
<div class="t" style="left:584.1px;top:286px;font-size:6.4px;line-height:11px;color:#5f5f5f;font-weight:400;width:68.40px;text-align:right;letter-spacing:-.45px;">88</div>
<div class="b" style="left:674.2px;top:107px;width:3.2px;height:107.5px;background:#ababab;border-radius:1.6px;"></div>
<div class="b" style="left:677.2px;top:87px;width:5.8px;height:216px;background:#fff;"></div>
<div class="b" style="left:0px;top:302.5px;width:687px;height:25.5px;background:#fafafa;border-top:1px solid #eee;"></div>
<div class="b" style="left:553px;top:308.2px;width:58px;height:14.6px;background:#42a5fb;border-radius:1px;"></div>
<div class="b" style="left:616px;top:308.2px;width:57.6px;height:14.6px;background:#42a5fb;border-radius:1px;"></div>
<div class="t" style="left:568.6px;top:310px;font-size:6.7px;line-height:11px;color:#fff;font-weight:400;">追加数据</div>
<div class="t" style="left:631.4px;top:310px;font-size:6.7px;line-height:11px;color:#fff;font-weight:400;">覆盖数据</div>
</div>
<svg style="left:0;top:0" width="1016" height="564" fill="none" stroke="#fbb80c" stroke-width="1.9">
<rect x="186.2" y="196.7" width="93.8" height="29.5" rx="5" stroke-dasharray="5.4 2.4"/>
<path d="M278.3 226.4 L307.6 325.6" stroke-dasharray="6 3"/>
<path d="M304.4 329 L310.4 335.2 L313 326.4" stroke-linecap="round" stroke-linejoin="round" stroke-width="1.9"/>
</svg>
</body>
</html>
